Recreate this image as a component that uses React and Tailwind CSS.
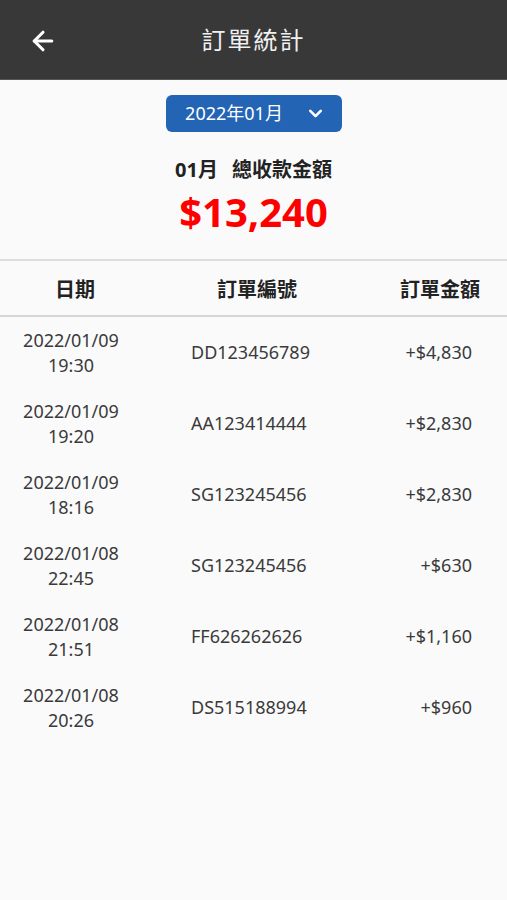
import { ArrowLeft, ChevronDown } from 'lucide-react'

const ORDERS = [
  { date: '2022/01/09', time: '19:30', no: 'DD123456789', amount: '+$4,830' },
  { date: '2022/01/09', time: '19:20', no: 'AA123414444', amount: '+$2,830' },
  { date: '2022/01/09', time: '18:16', no: 'SG123245456', amount: '+$2,830' },
  { date: '2022/01/08', time: '22:45', no: 'SG123245456', amount: '+$630' },
  { date: '2022/01/08', time: '21:51', no: 'FF626262626', amount: '+$1,160' },
  { date: '2022/01/08', time: '20:26', no: 'DS515188994', amount: '+$960' },
]

const FONT = "font-['Noto_Sans','Noto_Sans_CJK_TC',sans-serif]"

export default function App() {
  return (
    <div className={`min-h-[900px] bg-[#fafafa] ${FONT}`}>
      {/* Top bar */}
      <div className="relative h-[80px] bg-[#383838] flex items-center justify-center border-b border-[#555]">
        <button className="absolute left-[28px] top-[26px] text-white">
          <ArrowLeft size={30} strokeWidth={2.5} />
        </button>
        <h1 className="text-[24px] text-[#f0f0f0] tracking-[2px]">訂單統計</h1>
      </div>

      {/* Summary */}
      <div className="flex flex-col items-center pt-[15px]">
        <button className="flex items-center justify-center gap-[22px] w-[176px] h-[37px] pl-[4px] rounded-[6px] bg-[#2364b5] text-white text-[18px]">
          <span>2022年01月</span>
          <ChevronDown size={21} strokeWidth={3} />
        </button>
        <p className="mt-[24px] text-[20px] font-bold text-[#222] leading-[28px]">
          01月<span className="ml-[14px]">總收款金額</span>
        </p>
        <p className="mt-[4px] text-[40px] font-bold text-[#ff0000] leading-[48px]">$13,240</p>
      </div>

      {/* Table */}
      <div className="mt-[23px] border-t-2 border-[#dedede]">
        <div className="flex items-center h-[56px] pt-[3px] border-b-2 border-[#d6d6d6] text-[20px] font-bold text-[#222]">
          <div className="w-[150px] text-center">日期</div>
          <div className="flex-1 text-center pl-[7px]">訂單編號</div>
          <div className="w-[150px] text-right pr-[27px]">訂單金額</div>
        </div>
        {ORDERS.map((o, i) => (
          <div key={i} className="flex items-center h-[71px] text-[18px] text-[#3a3a3a]">
            <div className="w-[142px] text-center leading-[25px]">
              <div>{o.date}</div>
              <div>{o.time}</div>
            </div>
            <div className="flex-1 pl-[49px]">{o.no}</div>
            <div className="w-[150px] text-right pr-[35px]">{o.amount}</div>
          </div>
        ))}
      </div>
    </div>
  )
}
